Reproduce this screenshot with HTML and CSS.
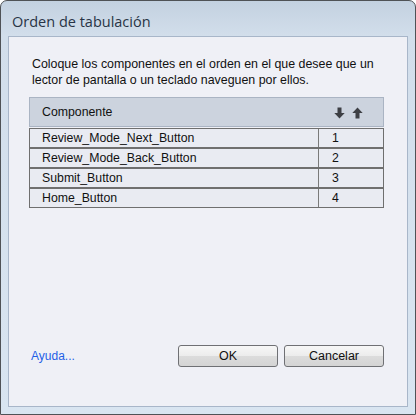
FILE: index.html
```html
<!DOCTYPE html>
<html lang="es">
<head>
<meta charset="utf-8">
<title>Orden de tabulación</title>
<link rel="stylesheet" href="styles.css">
</head>
<body>
<div class="window">
  <div class="titlebar">Orden de tabulación</div>
  <div class="panel">
    <p class="intro">Coloque los componentes en el orden en el que desee que un lector de pantalla o un teclado naveguen por ellos.</p>
    <div class="table">
      <div class="thead">
        <span class="th-name">Componente</span>
        <span class="arrows">
          <svg class="arrow" width="11" height="12" viewBox="0 0 11 12"><path d="M3.5 0.5h4v5.5h3.2l-5.2 5.5l-5.2-5.5h3.2z" fill="#3d3f44"/></svg>
          <svg class="arrow" width="11" height="12" viewBox="0 0 11 12"><path d="M3.5 11.5h4v-5.5h3.2l-5.2-5.5l-5.2 5.5h3.2z" fill="#3d3f44"/></svg>
        </span>
      </div>
      <div class="row"><span class="name">Review_Mode_Next_Button</span><span class="num">1</span></div>
      <div class="row"><span class="name">Review_Mode_Back_Button</span><span class="num">2</span></div>
      <div class="row"><span class="name">Submit_Button</span><span class="num">3</span></div>
      <div class="row"><span class="name">Home_Button</span><span class="num">4</span></div>
    </div>
    <div class="footer">
      <a class="help" href="#">Ayuda...</a>
      <div class="buttons">
        <button class="btn">OK</button>
        <button class="btn">Cancelar</button>
      </div>
    </div>
  </div>
</div>
</body>
</html>
```
FILE: styles.css
```css
html, body {
  margin: 0;
  padding: 0;
  background: #ffffff;
}
body {
  font-family: "Liberation Sans", Arial, sans-serif;
  font-size: 12px;
  color: #111;
}
.window {
  width: 416px;
  height: 415px;
  box-sizing: border-box;
  border: 1px solid #4f5256;
  border-radius: 7px 7px 0 0;
  background: linear-gradient(to bottom, #c3d1e0 0px, #d2deeb 35px, #d9e5f1 100%);
  display: flex;
  flex-direction: column;
  padding: 0 7px 7px 7px;
}
.titlebar {
  height: 35px;
  flex: none;
  font-family: "Open Sans", "Noto Sans", sans-serif;
  font-size: 14.5px;
  color: #283445;
  padding-left: 4px;
  line-height: 41px;
}
.panel {
  flex: 1;
  border: 1px solid #a8b6c9;
  background: #eff0f6;
  display: flex;
  flex-direction: column;
  padding: 0 23px 0 20px;
}
.intro {
  margin: 19px 0 0 3px;
  line-height: 16px;
  font-size: 12.4px;
  color: #111;
}
.table {
  margin-top: 9px;
  display: flex;
  flex-direction: column;
}
.thead {
  height: 28px;
  border: 1px solid #aab4c3;
  background: #ccd3de;
  display: flex;
  align-items: center;
  justify-content: space-between;
  padding: 0 20px 0 12px;
  margin-bottom: 1px;
  font-size: 12.3px;
}
.arrows {
  display: flex;
  gap: 7px;
  padding-top: 1px;
}
.arrow {
  display: block;
}
.row {
  height: 18px;
  border: 1px solid #6f6f6f;
  background: #e9ebf2;
  display: flex;
  font-size: 12.3px;
  line-height: 18px;
}
.name {
  flex: 1;
  padding-left: 12px;
  border-right: 1px solid #7a7a7a;
}
.num {
  width: 51px;
  padding-left: 13px;
}
.footer {
  margin-top: auto;
  margin-bottom: 39px;
  display: flex;
  align-items: center;
  justify-content: space-between;
  padding-left: 2px;
  padding-right: 0;
}
.help {
  color: #1f5fe6;
  text-decoration: none;
  font-size: 12px;
}
.buttons {
  display: flex;
  gap: 6px;
}
.btn {
  width: 100px;
  height: 22px;
  box-sizing: border-box;
  border: 1px solid #6f7074;
  border-radius: 3px;
  background: linear-gradient(to bottom, #f7f7f7 0%, #ececec 50%, #dcdcdc 51%, #d4d4d4 100%);
  font-family: "Liberation Sans", Arial, sans-serif;
  font-size: 12.5px;
  color: #111;
  padding: 0;
}
```
